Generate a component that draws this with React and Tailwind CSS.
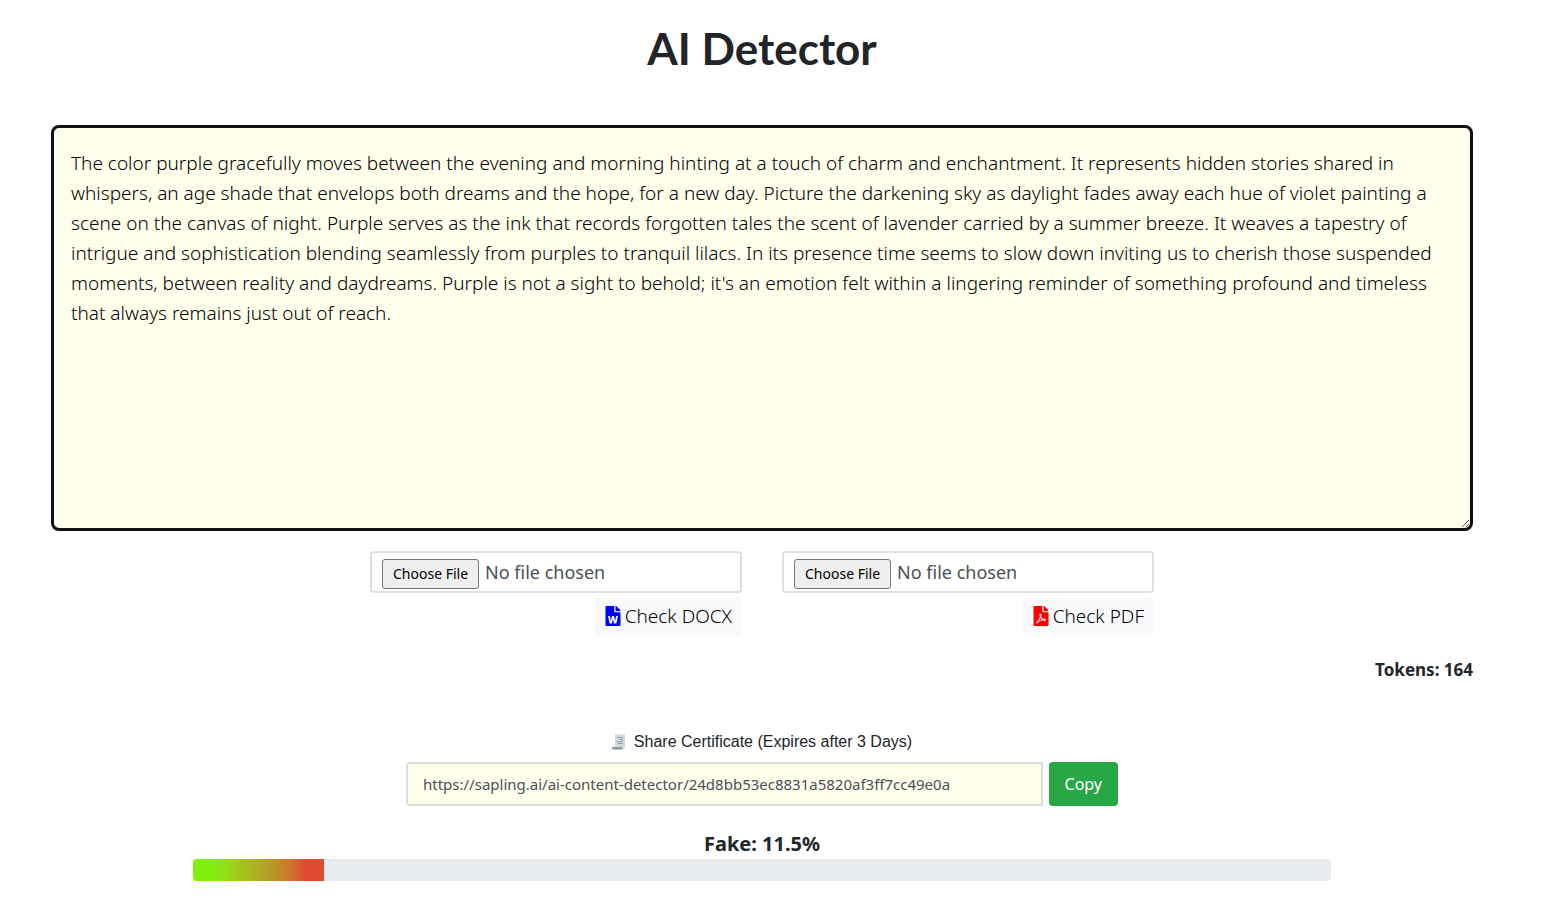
import React, { useState } from 'react';
import { FaFilePdf, FaFileWord } from 'react-icons/fa';

const SAMPLE_TEXT =
    "The color purple gracefully moves between the evening and morning hinting at a touch of charm and enchantment. It represents hidden stories shared in whispers, an age shade that envelops both dreams and the hope, for a new day. Picture the darkening sky as daylight fades away each hue of violet painting a scene on the canvas of night. Purple serves as the ink that records forgotten tales the scent of lavender carried by a summer breeze. It weaves a tapestry of intrigue and sophistication blending seamlessly from purples to tranquil lilacs. In its presence time seems to slow down inviting us to cherish those suspended moments, between reality and daydreams. Purple is not a sight to behold; it's an emotion felt within a lingering reminder of something profound and timeless that always remains just out of reach.";

const SHARE_URL = 'https://sapling.ai/ai-content-detector/24d8bb53ec8831a5820af3ff7cc49e0a';

const ReceiptIcon = () => (
    <svg width="14" height="16" viewBox="0 0 14 16" aria-hidden="true">
        <path d="M3 1h10v12.5a2 2 0 0 1-2 2H3z" fill="#d3d9db" />
        <path d="M3 1l1-1 1 1 1-1 1 1 1-1 1 1 1-1 1 1 1-1 1 1z" fill="#d3d9db" />
        <path d="M5 3.5h6M7.5 5.5H11M5 7.5h6M6 9.5h5" stroke="#98a3a7" strokeWidth="1" />
        <path d="M0 13h10v1a1.5 1.5 0 0 0 1.5 1.5H1.5A1.5 1.5 0 0 1 0 14z" fill="#8e999d" />
    </svg>
);

const FileCheck = ({ id, accept, label, icon }) => (
    <div className="flex w-[372px] flex-col items-end gap-1">
        <input
            id={id}
            type="file"
            accept={accept}
            aria-label={`${label} file`}
            className="h-[42px] w-full rounded border-2 border-[#dde1e6] bg-white px-2.5 pt-1 text-lg leading-[30px] text-[#495057] file:mr-1.5 file:h-[30px] file:rounded-[3px] file:border file:border-solid file:border-[#767676] file:bg-[#efefef] file:px-2.5 file:text-sm file:font-normal file:text-black"
        />
        <button
            type="button"
            className="flex h-[38px] items-center gap-1 rounded bg-[#f8f9fa] px-2.5 text-[19px] font-light text-black"
        >
            {icon}
            {label}
        </button>
    </div>
);

const App = () => {
    const [text, setText] = useState(SAMPLE_TEXT);
    const fake = 11.5;

    return (
        <main className="flex flex-col bg-white pt-5 pr-[72px] pb-8 pl-[51px] font-['Noto_Sans',sans-serif] text-[#212529]">
            <h1 className="text-center font-['Lato',sans-serif] text-[44px] leading-[56px] font-bold">AI Detector</h1>

            <textarea
                aria-label="Text to check"
                spellCheck={false}
                value={text}
                onChange={e => setText(e.target.value)}
                className="mt-[49px] h-[406px] w-full resize rounded-lg border-3 border-[#111] bg-[#ffffec] px-[17px] py-5 text-[19px] leading-[30px] font-light text-black outline-none"
            />

            <div className="mt-5 flex justify-center gap-10">
                <FileCheck id="docx" accept=".docx" label="Check DOCX" icon={<FaFileWord className="w-4 text-xl text-[#00f]" />} />
                <FileCheck id="pdf" accept=".pdf" label="Check PDF" icon={<FaFilePdf className="w-4 text-xl text-[#f00]" />} />
            </div>

            <p className="mt-5 text-right text-[17px] leading-[30px] font-bold">Tokens: 164</p>

            <div className="mx-auto mt-[45px] flex w-[712px] flex-col">
                <label
                    htmlFor="share"
                    className="flex items-center justify-center gap-2 font-['Liberation_Sans',sans-serif] text-base"
                >
                    <ReceiptIcon />
                    Share Certificate (Expires after 3 Days)
                </label>
                <div className="mt-2 flex gap-1.5">
                    <input
                        id="share"
                        type="text"
                        readOnly
                        value={SHARE_URL}
                        className="h-11 min-w-0 flex-1 rounded-l border-2 border-[#d9dde2] bg-[#ffffec] px-[15px] text-[15px] text-[#495057] outline-none"
                    />
                    <button type="button" className="h-11 rounded bg-[#28a745] px-4 text-base text-white">
                        Copy
                    </button>
                </div>
            </div>

            <div className="mx-auto mt-[23px] w-4/5">
                <p className="text-center text-xl leading-[30px] font-bold">Fake: {fake}%</p>
                <div className="h-[22px] overflow-hidden rounded bg-[#e9ecef]">
                    <div
                        className="h-full bg-linear-to-r from-[#80f00c] from-15% via-[#b49a25] via-60% to-[#dd4c30] to-85%"
                        style={{ width: `${fake}%` }}
                    />
                </div>
            </div>
        </main>
    );
};

export default App;
